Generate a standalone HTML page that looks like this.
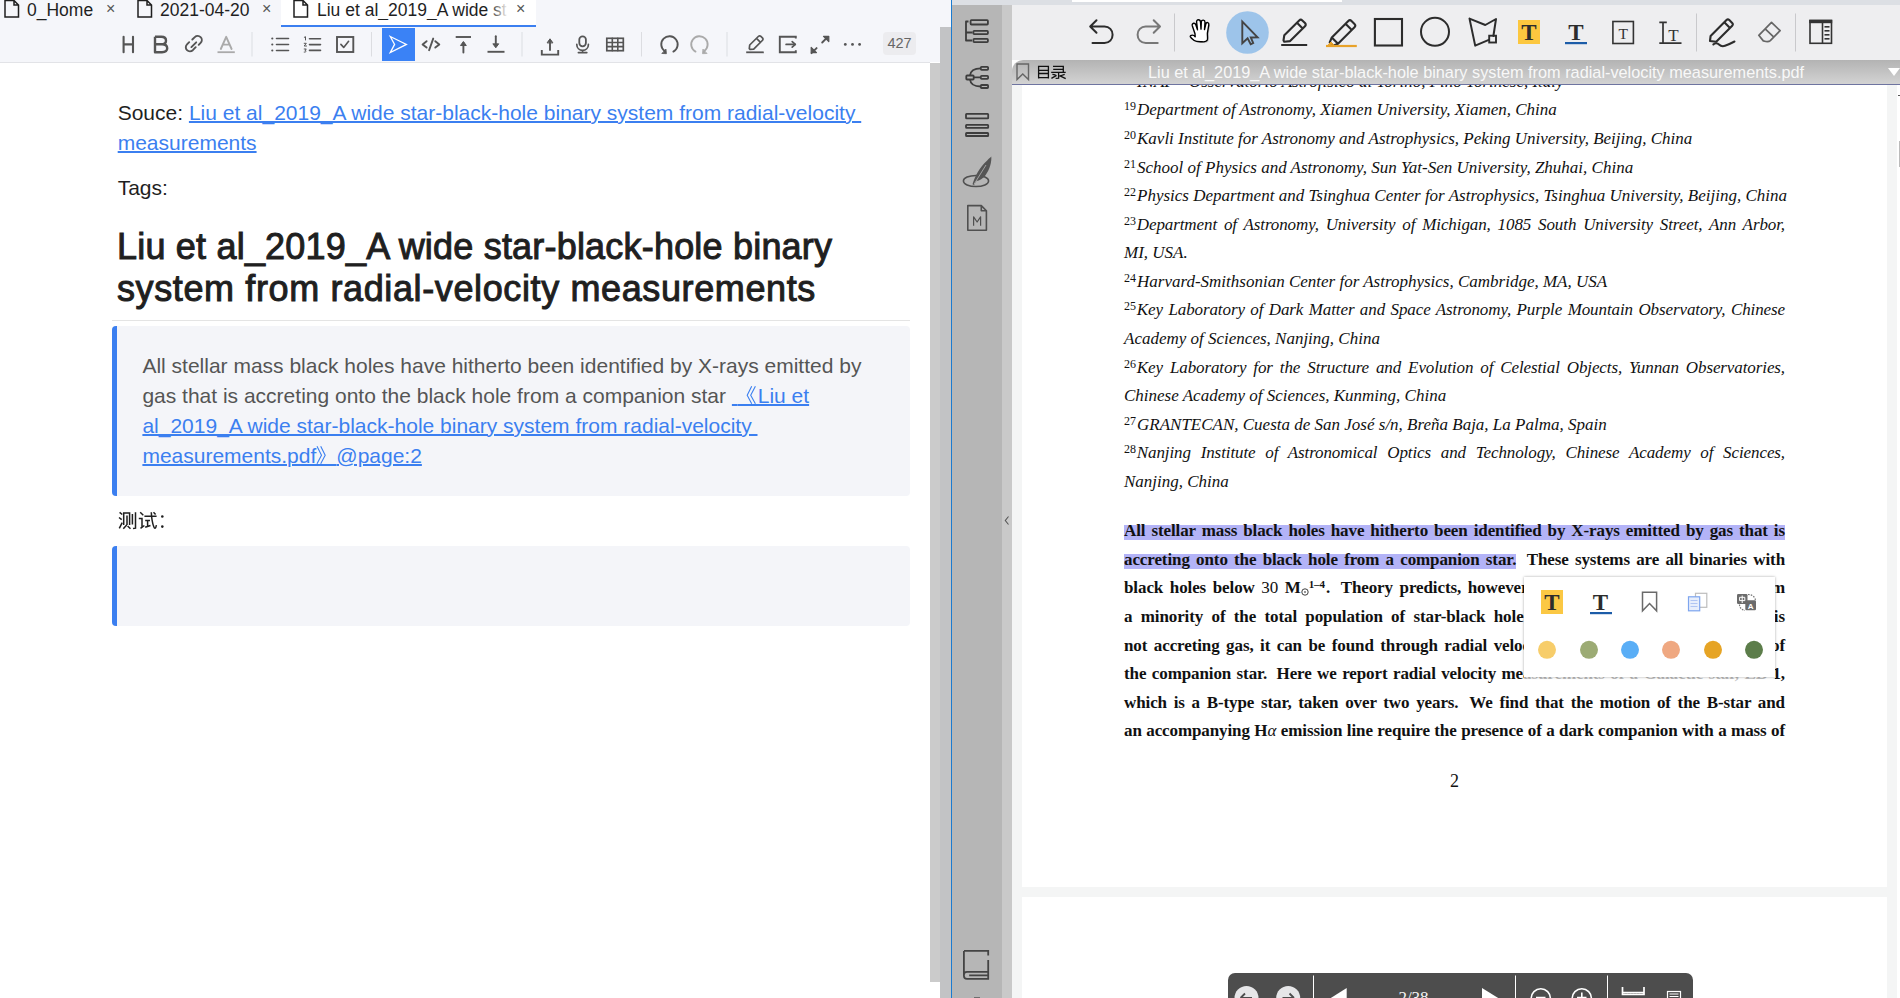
<!DOCTYPE html>
<html><head><meta charset="utf-8">
<style>
*{margin:0;padding:0;box-sizing:border-box}
html,body{width:1900px;height:998px;overflow:hidden;background:#fff;font-family:"Liberation Sans",sans-serif}
.a{position:absolute}
svg{position:absolute;overflow:visible}
.tt{position:absolute;white-space:nowrap;font-size:17.5px;color:#1f1f1f;line-height:20px}
.tx{position:absolute;font-size:16px;color:#555;line-height:16px}
.ic{fill:none;stroke:#555;stroke-width:1.6;stroke-linecap:round;stroke-linejoin:round}
.sep{position:absolute;top:32px;width:1px;height:24px;background:#dcdde1}
.body{position:absolute;font-size:21px;line-height:30px;white-space:nowrap;color:#1f1f1f}
.lk{color:#3b7ff0;text-decoration:underline;text-decoration-thickness:2px;text-underline-offset:1px}
.pdf{position:absolute;left:1124px;width:661px;font-family:"Liberation Serif",serif;font-size:17px;line-height:28.45px;color:#111;white-space:nowrap}
.it{font-style:italic}
.bd{font-weight:bold}
sup{font-size:11px;font-style:normal;vertical-align:0;position:relative;top:-7px;margin-right:1px}
.pt{fill:none;stroke:#2b2b2b;stroke-width:2;stroke-linejoin:round;stroke-linecap:round}
.pl{position:absolute;left:1124px;width:661px;font-family:"Liberation Serif",serif;font-size:17px;line-height:28.57px;height:28.57px;white-space:nowrap;color:#111}
.j{text-align:justify;text-align-last:justify;white-space:normal;letter-spacing:-0.1px}
.pl sup{font-size:12px;font-style:normal;font-weight:normal;position:relative;top:-5px;vertical-align:baseline;margin-right:1px}
.pl sup.b{font-weight:bold;font-size:11px}
.sun{font-size:11px;font-weight:normal;position:relative;top:4px}
</style></head><body>

<!-- ============ LEFT PANEL ============ -->
<div class="a" style="left:0;top:0;width:951px;height:62px;background:#f5f6fa"></div>
<div class="a" style="left:0;top:62px;width:930px;height:1px;background:#e2e3e7"></div>

<!-- tabs -->
<svg style="left:4px;top:0" width="16" height="18" viewBox="0 0 16 18"><path d="M1 .5 H10 L14.5 5 V17 H1 Z M10 .5 V5 H14.5" fill="none" stroke="#1f1f1f" stroke-width="1.5"/></svg>
<div class="tt" style="left:27px;top:0px">0_Home</div>
<div class="tx" style="left:106px;top:1px">×</div>
<svg style="left:137px;top:0" width="16" height="18" viewBox="0 0 16 18"><path d="M1 .5 H10 L14.5 5 V17 H1 Z M10 .5 V5 H14.5" fill="none" stroke="#1f1f1f" stroke-width="1.5"/></svg>
<div class="tt" style="left:160px;top:0px">2021-04-20</div>
<div class="tx" style="left:262px;top:1px">×</div>
<div class="a" style="left:281px;top:0;width:255px;height:25px;background:#fff"></div>
<div class="a" style="left:281px;top:25px;width:255px;height:2px;background:#3b7ff0"></div>
<svg style="left:293px;top:0" width="16" height="18" viewBox="0 0 16 18"><path d="M1 .5 H10 L14.5 5 V17 H1 Z M10 .5 V5 H14.5" fill="none" stroke="#1f1f1f" stroke-width="1.5"/></svg>
<div class="tt" style="left:317px;top:0px;width:190px;overflow:hidden">Liu et al_2019_A wide star</div>
<div class="a" style="left:490px;top:0;width:18px;height:25px;background:linear-gradient(90deg,rgba(255,255,255,0),#fff)"></div>
<div class="tx" style="left:516px;top:1px">×</div>

<!-- toolbar -->
<div class="a" style="left:382px;top:28px;width:33px;height:33px;background:#3a82f6"></div>
<svg class="a" style="left:382px;top:28px" width="33" height="33" viewBox="382 28 33 33"><path d="M390.3 36.5L406.4 44.4L390.3 52.5L394.6 44.4Z" fill="none" stroke="#fff" stroke-width="1.3" stroke-linejoin="miter"/></svg>
<svg class="a" style="left:0;top:0" width="1900" height="998" viewBox="0 0 1900 998">
<g fill="none" stroke="#555" stroke-width="1.8" stroke-linecap="round" stroke-linejoin="round">
 <!-- H -->
 <path d="M123.6 36.8V52.3 M133 36.8V52.3 M123.6 44.4H133" stroke-width="2.1"/>
 <!-- B -->
 <path d="M155 36.8H161.3C164.3 36.8 166 38.5 166 40.7C166 42.9 164.3 44.3 161.3 44.3H155 M155 44.3H162C165.2 44.3 167.2 45.9 167.2 48.3C167.2 50.7 165.2 52.2 162 52.2H155V36.8" stroke-width="2.4" stroke-linecap="butt"/>
 <!-- link -->
 <path d="M192.3 39.5L194.8 37.1C196.5 35.5 199 35.6 200.6 37.2C202.2 38.8 202.2 41.3 200.6 42.9L198.7 44.8 M195.7 47.2L192.8 50.2C191.1 51.8 188.6 51.8 187 50.2C185.4 48.6 185.4 46 187 44.4L189.2 42.2 M191.4 47.1L196.2 42.3" stroke-width="1.9"/>
 <!-- A gray -->
 <path d="M220.8 49L226.2 36.8L231.6 49 M222.8 44.6H229.6" stroke="#aaa" stroke-width="1.9"/>
 <path d="M217.5 52.2H234.8" stroke="#aaa" stroke-width="1.8" stroke-linecap="butt"/>
 <!-- ul -->
 <path d="M276.5 38.5H288.5 M276.5 44.5H288.5 M276.5 50.5H288.5" stroke-width="1.6"/>
 <circle cx="272.3" cy="38.5" r="1.1" fill="#555" stroke="none"/><circle cx="272.3" cy="44.5" r="1.1" fill="#555" stroke="none"/><circle cx="272.3" cy="50.5" r="1.1" fill="#555" stroke="none"/>
 <!-- ol -->
 <path d="M309.5 38.7H320.5 M309.5 44.6H320.5 M309.5 50.4H320.5" stroke-width="1.6"/>
 <path d="M304.3 37.3L305.5 36.7V40" stroke-width="1"/>
 <path d="M304.2 43.3H306.3L304.2 46H306.5" stroke-width="1"/>
 <path d="M304.2 49H306.3L305 50.3C306.6 50.5 306.6 52.3 304.2 52.1" stroke-width="1"/>
 <!-- checkbox -->
 <rect x="337" y="37" width="16.3" height="15" stroke-width="1.9" stroke-linejoin="miter"/>
 <path d="M340.9 44.4L343.7 47.4L348.6 41.3" stroke-width="1.6"/>
 <!-- code -->
 <path d="M426.6 41.2L422.6 44.4L426.6 47.6 M435.3 41.2L439.3 44.4L435.3 47.6 M433.2 38.6L429.1 50.2" stroke-width="1.9"/>
 <!-- top arrow -->
 <path d="M455.7 37H471" stroke-width="1.9" stroke-linecap="butt"/>
 <path d="M463.4 43V52.5" stroke-width="1.9"/>
 <path d="M460.7 45.2L463.4 41.5L466.1 45.2Z" fill="#555" stroke-width="1"/>
 <!-- bottom arrow -->
 <path d="M487.5 51.8H504.5" stroke-width="1.9" stroke-linecap="butt"/>
 <path d="M495.8 36.2V45.6" stroke-width="1.9"/>
 <path d="M493.1 44.1L495.8 47.8L498.5 44.1Z" fill="#555" stroke-width="1"/>
 <!-- upload -->
 <path d="M541.8 50V54.6H558.2V50" stroke-width="1.9" stroke-linecap="butt" stroke-linejoin="miter"/>
 <path d="M550 41.5V50" stroke-width="1.9"/>
 <path d="M547.3 42.6L550 38.8L552.7 42.6Z" fill="#555" stroke-width="1"/>
 <!-- mic -->
 <rect x="579.3" y="36.3" width="6.6" height="10" rx="3.3" stroke-width="1.8"/>
 <path d="M576.8 44.4C576.8 48 579.4 50.3 582.6 50.3C585.8 50.3 588.4 48 588.4 44.4 M582.6 50.3V52.6 M578.4 52.6H586.8" stroke-width="1.7"/>
 <!-- table -->
 <rect x="606.8" y="38.3" width="16.5" height="12.4" stroke-width="1.7" stroke-linejoin="miter"/>
 <path d="M606.8 42.5H623.3 M606.8 46.6H623.3 M612.3 38.3V50.7 M617.8 38.3V50.7" stroke-width="1.6"/>
 <!-- undo -->
<g transform="translate(0,0.8)"> <path d="M664.6 50.2A8.2 8.2 0 1 1 673.4 50.8" stroke-width="1.9"/>
 <path d="M666 48.6L666.4 52.9L662.2 52.7Z" fill="#555" stroke-width="0.8"/></g>
 <!-- redo -->
<g transform="translate(0,0.8)"> <g stroke="#aaa"><path d="M704.3 50.2A8.2 8.2 0 1 0 695.5 50.8" stroke-width="1.9"/><path d="M702.9 48.6L702.5 52.9L706.7 52.7Z" fill="#aaa" stroke-width="0.8"/></g></g>
 <!-- pen -->
 <path d="M749.3 48.6L749.7 45L758.3 36.5C759.2 35.6 760.1 35.6 760.9 36.4L762.4 37.9C763.2 38.7 763.2 39.6 762.3 40.5L753.7 49.1L750 49.3Z M756.5 38.4L760.5 42.3" stroke-width="1.7"/>
 <path d="M746.2 52.3H763.8" stroke-width="1.8" stroke-linecap="butt"/>
 <!-- export -->
 <path d="M795.8 38.4V36.8H779.8V52.2H795.8V50.3" stroke-width="1.9" stroke-linecap="butt" stroke-linejoin="miter"/>
 <path d="M786.2 44.4H795" stroke-width="1.9"/>
 <path d="M792.2 41.6L795.3 44.4L792.2 47.2" stroke-width="1.7"/>
 <!-- expand -->
 <path d="M822.2 42.5L827.5 37.2 M816.6 48.1L811.5 53.2" stroke-width="1.9"/>
 <path d="M823.5 36.3H828.8V41.6Z M811.2 47.4V52.6H816.5Z" fill="#555" stroke-width="1.2"/>
</g>
<g fill="#555"><circle cx="845.3" cy="44.4" r="1.4"/><circle cx="852.5" cy="44.4" r="1.4"/><circle cx="859.6" cy="44.4" r="1.4"/></g>
<g fill="#dcdde1"><rect x="251.5" y="32" width="1" height="24.5"/><rect x="371" y="32" width="1" height="24.5"/><rect x="521.5" y="32" width="1" height="24.5"/><rect x="641" y="32" width="1" height="24.5"/><rect x="726.5" y="32" width="1" height="24.5"/></g>
</svg>

<div class="a" style="left:883px;top:32px;width:33px;height:23px;background:#ececef;border-radius:4px"></div>
<div class="a" style="left:883px;top:32px;width:33px;height:23px;font-size:14.5px;line-height:23px;text-align:center;color:#666">427</div>


<!-- content -->
<div class="body" style="left:117.7px;top:98px">Souce: <span class="lk">Liu et al_2019_A wide star-black-hole binary system from radial-velocity&nbsp;</span></div>
<div class="body" style="left:117.7px;top:128px"><span class="lk">measurements</span></div>
<div class="body" style="left:117.7px;top:173px">Tags:</div>
<div class="a" style="left:117px;top:225.8px;font-size:36px;line-height:42.2px;font-weight:normal;letter-spacing:0.2px;-webkit-text-stroke:1px #1f1f1f;color:#1f1f1f;white-space:nowrap">Liu et al_2019_A wide star-black-hole binary<br><span style="letter-spacing:0.62px">system from radial-velocity measurements</span></div>
<div class="a" style="left:112px;top:320px;width:798px;height:1px;background:#e4e4e4"></div>
<div class="a" style="left:112px;top:326px;width:798px;height:170px;background:#f4f5f9;border-radius:4px"></div>
<div class="a" style="left:112px;top:326px;width:5px;height:170px;background:#3b7ff0;border-radius:4px 0 0 4px"></div>
<div class="body" style="left:142.4px;top:351px;color:#555">All stellar mass black holes have hitherto been identified by X-rays emitted by<br>gas that is accreting onto the black hole from a companion star <span class="lk">&nbsp;</span><span style="display:inline-block;width:20px;height:0;border-bottom:2px solid #3b7ff0;position:relative;top:3px"><svg style="left:0;top:-24px" width="20" height="24" viewBox="0 0 20 24"><path d="M13.7 6.3L9.2 15.3L13.7 23.7 M17.4 6.3L12.7 15.3L17.4 23.7" fill="none" stroke="#3b7ff0" stroke-width="1.1"/></svg></span><span class="lk">Liu et</span><br><span class="lk">al_2019_A wide star-black-hole binary system from radial-velocity&nbsp;</span><br><span class="lk">measurements.pdf</span><span style="display:inline-block;width:20px;height:0;border-bottom:2px solid #3b7ff0;position:relative;top:3px"><svg style="left:0;top:-24px" width="20" height="24" viewBox="0 0 20 24"><path d="M1 6.3L5.5 15.3L1 23.7 M4.7 6.3L9.2 15.3L4.7 23.7" fill="none" stroke="#3b7ff0" stroke-width="1.1"/></svg></span><span class="lk">@page:2</span></div>
<svg class="a" style="left:0;top:0" width="1900" height="998" viewBox="0 0 1900 998"><g fill="none" stroke="#1f1f1f" stroke-width="1.5" stroke-linecap="butt">
<path d="M119.6 512.3L122.3 514.5 M119 517.5L121.7 519.6 M119.3 528.4L122.2 522.6"/>
<path d="M123.7 524.9V513.1H129.6V524.9 M127 515.4V524.9 M126.7 524.9L123.3 528.7 M127.6 526L130.5 528.7"/>
<path d="M132.4 514V524.6 M135.5 512.2V528.2L133 528.6"/>
<path d="M140.2 512.3L143.3 515.2 M138.8 518.4H142V526.9 M140.5 528.4L144.4 525.5"/>
<path d="M144.4 516.3H156.6 M145.2 520.4H150 M147.6 520.4V526.3 M145.2 527.3L150.5 525.5 M151.3 512.2C151.5 517 152 522 153.8 526.8C154.5 528.6 155.7 529.3 156.4 525.2 M153.5 512.3L155.6 514.5"/>
</g><circle cx="162.3" cy="516.5" r="1.3" fill="#1f1f1f"/><circle cx="162.3" cy="526.6" r="1.3" fill="#1f1f1f"/></svg>
<div class="a" style="left:112px;top:546px;width:798px;height:80px;background:#f4f5f9;border-radius:4px"></div>
<div class="a" style="left:112px;top:546px;width:5px;height:80px;background:#3b7ff0;border-radius:4px 0 0 4px"></div>

<!-- left scrollbars -->
<div class="a" style="left:930px;top:63px;width:10px;height:919px;background:#cbcbcb"></div>
<div class="a" style="left:940px;top:27px;width:11px;height:971px;background:#c2c3c5"></div>

<!-- ============ RIGHT PANEL ============ -->
<div class="a" style="left:951px;top:0;width:1px;height:998px;background:#1b7bd0"></div>
<div class="a" style="left:952px;top:0;width:948px;height:5px;background:#dcdfe4"></div>
<div class="a" style="left:1072px;top:0;width:270px;height:2px;background:#fff"></div>
<div class="a" style="left:952px;top:5px;width:50px;height:993px;background:#b6b6b6"></div>
<div class="a" style="left:1002px;top:5px;width:10px;height:993px;background:#c9c9c9"></div>
<div class="a" style="left:1012px;top:5px;width:888px;height:55px;background:#eeeef0"></div>
<div class="a" style="left:1012px;top:85px;width:888px;height:913px;background:#f4f5f5"></div>
<div class="a" style="left:1022px;top:85px;width:865px;height:802px;background:#fff"></div>
<div class="a" style="left:1022px;top:897px;width:865px;height:101px;background:#fff"></div>
<div class="a" style="left:1897px;top:85px;width:3px;height:913px;background:#fff"></div>

<div class="a" style="left:1124px;top:525px;width:661px;height:15px;background:#b3b3f7"></div>
<div class="a" style="left:1124px;top:553.5px;width:392px;height:15px;background:#b3b3f7"></div>
<div class="pl ln it" style="top:67.83px"><sup>18</sup>INAF - Osservatorio Astrofisico di Torino, Pino Torinese, Italy</div>
<div class="pl ln it" style="top:96.40px"><sup>19</sup>Department of Astronomy, Xiamen University, Xiamen, China</div>
<div class="pl ln it" style="top:124.97px"><sup>20</sup>Kavli Institute for Astronomy and Astrophysics, Peking University, Beijing, China</div>
<div class="pl ln it" style="top:153.54px"><sup>21</sup>School of Physics and Astronomy, Sun Yat-Sen University, Zhuhai, China</div>
<div class="pl ln it" style="top:182.11px"><sup>22</sup>Physics Department and Tsinghua Center for Astrophysics, Tsinghua University, Beijing, China</div>
<div class="pl ln it j" style="top:210.68px"><sup>23</sup>Department of Astronomy, University of Michigan, 1085 South University Street, Ann Arbor,</div>
<div class="pl ln it" style="top:239.25px">MI, USA.</div>
<div class="pl ln it" style="top:267.82px"><sup>24</sup>Harvard-Smithsonian Center for Astrophysics, Cambridge, MA, USA</div>
<div class="pl ln it j" style="top:296.39px"><sup>25</sup>Key Laboratory of Dark Matter and Space Astronomy, Purple Mountain Observatory, Chinese</div>
<div class="pl ln it" style="top:324.96px">Academy of Sciences, Nanjing, China</div>
<div class="pl ln it j" style="top:353.53px"><sup>26</sup>Key Laboratory for the Structure and Evolution of Celestial Objects, Yunnan Observatories,</div>
<div class="pl ln it" style="top:382.10px">Chinese Academy of Sciences, Kunming, China</div>
<div class="pl ln it" style="top:410.67px"><sup>27</sup>GRANTECAN, Cuesta de San José s/n, Breña Baja, La Palma, Spain</div>
<div class="pl ln it j" style="top:439.24px"><sup>28</sup>Nanjing Institute of Astronomical Optics and Technology, Chinese Academy of Sciences,</div>
<div class="pl ln it" style="top:467.81px">Nanjing, China</div>
<div class="pl ln bd j" style="top:517.30px"><span class="hl">All stellar mass black holes have hitherto been identified by X-rays emitted by gas that is</span></div>
<div class="pl ln bd j" style="top:545.85px"><span class="hl">accreting onto the black hole from a companion star.</span> <span style="margin-left:4px"></span>These systems are all binaries with</div>
<div class="pl ln bd j" style="top:574.40px">black holes below <span style="font-weight:normal">30</span> M<span style="display:inline-block;width:8px;height:8px;position:relative;top:3px"><svg style="left:0;top:0" width="8" height="8" viewBox="0 0 8 8"><circle cx="4" cy="4" r="3.2" fill="none" stroke="#111" stroke-width="0.8"/><circle cx="4" cy="4" r="0.8" fill="#111"/></svg></span><sup class="b">1–4</sup>. <span style="margin-left:4px"></span>Theory predicts, however, that X-ray emitting systems form</div>
<div class="pl ln bd j" style="top:602.95px">a minority of the total population of star-black hole binaries. <span style="margin-left:4px"></span>When the black hole is</div>
<div class="pl ln bd j" style="top:631.50px">not accreting gas, it can be found through radial velocity measurements of the motion of</div>
<div class="pl ln bd j" style="top:660.05px">the companion star. <span style="margin-left:4px"></span>Here we report radial velocity measurements of a Galactic star, LB-1,</div>
<div class="pl ln bd j" style="top:688.60px">which is a B-type star, taken over two years. <span style="margin-left:4px"></span>We find that the motion of the B-star and</div>
<div class="pl ln bd j" style="top:717.15px">an accompanying H<i style="font-weight:normal">α</i> emission line require the presence of a dark companion with a mass of</div>
<div class="a" style="left:1450px;top:766.5px;font-family:'Liberation Serif',serif;font-size:18px;line-height:28px;color:#111">2</div>

<svg class="a" style="left:0;top:0" width="1900" height="998" viewBox="0 0 1900 998">
<g fill="none" stroke="#2c2c2c" stroke-width="2" stroke-linecap="round" stroke-linejoin="round">
 <!-- undo -->
 <path d="M1090.2 26.5L1096.5 20.2 M1090.2 26.5L1096.5 32.8 M1090.5 26.5H1104.5C1109.3 26.5 1112.6 30 1112.6 34.7C1112.6 39.4 1109.3 43 1104.5 43H1092.5"/>
 <!-- redo -->
 <path d="M1160 26.5L1153.7 20.2 M1160 26.5L1153.7 32.8 M1159.7 26.5H1145.7C1140.9 26.5 1137.6 30 1137.6 34.7C1137.6 39.4 1140.9 43 1145.7 43H1157.7" stroke="#777"/>
 <!-- separators -->
 <path d="M1174.5 13.5V51.5 M1696.5 13.5V51.5 M1795.5 13.5V51.5" stroke="#c9c9cc" stroke-width="1" stroke-linecap="butt"/>
</g>
<!-- hand -->
<g transform="translate(1190,19.5)">
 <path d="M4.2 21C2.3 19.6 0.6 18 0.3 17.3C0 16.4 1 15.6 2.4 15.6C3.7 15.6 4.8 16.7 5.2 17.2L5 14.3L2.3 6.3C1.9 5 2.6 4 3.6 3.8C4.6 3.6 5.5 4.3 5.9 5.5L7.5 10.3L6.6 2.5C6.5 1.2 7.2 0.2 8.4 0.2C9.6 0.2 10.4 1.1 10.5 2.4L11 9.6L11.3 2.6C11.4 1.3 12.2 0.5 13.3 0.6C14.4 0.7 15 1.6 15 2.9L14.5 10.1L15.8 4.6C16.1 3.5 16.9 2.9 17.8 3.1C18.7 3.3 19 4.1 18.8 5.3L17.4 13.6C17.3 16.5 17.9 18.6 17.4 20.3C16.9 21.5 15 22.5 12.2 22.3C9.4 22.2 6.3 22.5 4.2 21Z" fill="#000" opacity="0.18" transform="translate(1.2,1.3)"/>
 <path d="M4.2 21C2.3 19.6 0.6 18 0.3 17.3C0 16.4 1 15.6 2.4 15.6C3.7 15.6 4.8 16.7 5.2 17.2L5 14.3L2.3 6.3C1.9 5 2.6 4 3.6 3.8C4.6 3.6 5.5 4.3 5.9 5.5L7.5 10.3L6.6 2.5C6.5 1.2 7.2 0.2 8.4 0.2C9.6 0.2 10.4 1.1 10.5 2.4L11 9.6L11.3 2.6C11.4 1.3 12.2 0.5 13.3 0.6C14.4 0.7 15 1.6 15 2.9L14.5 10.1L15.8 4.6C16.1 3.5 16.9 2.9 17.8 3.1C18.7 3.3 19 4.1 18.8 5.3L17.4 13.6C17.3 16.5 17.9 18.6 17.4 20.3C16.9 21.5 15 22.5 12.2 22.3C9.4 22.2 6.3 22.5 4.2 21Z" fill="#fff" stroke="#000" stroke-width="1.4" stroke-linejoin="round"/>
</g>
<!-- select circle + cursor -->
<circle cx="1247.5" cy="32.5" r="21.3" fill="#9dc4ea"/>
<path d="M1242.3 21.5V43.3L1247.6 38.3L1250.7 44.3L1253.2 43L1250.8 37.5L1257.6 37.3Z" fill="none" stroke="#444" stroke-width="1.9" stroke-linejoin="miter"/>
<g fill="none" stroke="#2c2c2c" stroke-width="2.1" stroke-linejoin="round" stroke-linecap="round">
 <!-- pen -->
 <path d="M1283.5 40.5L1284.3 35.2L1299.2 20.4C1300.2 19.4 1301.3 19.4 1302.3 20.4L1305 23.1C1306 24.1 1306 25.2 1305 26.2L1290.1 41.1L1284.2 41.7Z M1297 22.7L1302.7 28.4"/>
 <path d="M1281.2 45H1307.2" stroke-width="2" stroke-linecap="butt"/>
 <!-- highlighter -->
 <path d="M1331.8 37.5L1348.3 21C1349.3 20 1350.5 20 1351.5 21L1354.5 24C1355.5 25 1355.5 26.2 1354.5 27.2L1338 43.7Z M1345.5 23.8L1351.8 30.1 M1331.8 37.5L1329.7 42.3L1333.3 45.8L1338 43.7"/>
 <path d="M1328.5 44.4L1331 42L1333.5 44.6Z" fill="#e8a229" stroke="#e8a229" stroke-width="1"/>
 <path d="M1326 46H1356.8" stroke="#e8a229" stroke-width="2.2" stroke-linecap="butt"/>
 <!-- rect -->
 <rect x="1374.9" y="19" width="27.1" height="26.5" stroke-width="2.1" stroke-linejoin="miter"/>
 <!-- circle -->
 <circle cx="1435" cy="31.8" r="14" stroke-width="2"/>
 <!-- polygon -->
 <path d="M1469.5 18.6L1485.3 25L1496 19L1493.4 36 M1488.8 39.8L1475.2 45.6L1469.5 18.6" stroke-width="2"/>
 <rect x="1489.2" y="35.7" width="6.8" height="6.8" stroke-width="1.9" stroke-linejoin="miter"/>
</g>
<!-- yellow T -->
<rect x="1518" y="20" width="22" height="24" fill="#fcc73f"/>
<g font-family="Liberation Serif" fill="#2c2c2c">
 <text x="1529" y="40" font-size="23" font-weight="bold" text-anchor="middle">T</text>
 <text x="1576" y="39.5" font-size="23" font-weight="bold" text-anchor="middle">T</text>
</g>
<rect x="1565" y="42" width="22" height="2.2" fill="#1c5ca8"/>
<!-- boxed T -->
<rect x="1612.9" y="21.5" width="20.5" height="22" fill="none" stroke="#333" stroke-width="1.6"/>
<text x="1623.2" y="38.5" font-family="Liberation Serif" font-size="15.5" text-anchor="middle" fill="#333">T</text>
<!-- It -->
<g fill="none" stroke="#333" stroke-width="1.7">
 <path d="M1663 22.3V43 M1659.3 22.3H1666.8 M1659.3 43.2H1681.5"/>
</g>
<text x="1673.5" y="40.5" font-family="Liberation Serif" font-size="17" text-anchor="middle" fill="#333">T</text>
<!-- signature pen -->
<g fill="none" stroke="#2c2c2c" stroke-width="2.1" stroke-linejoin="round" stroke-linecap="round">
 <path d="M1710 41L1710.6 36L1726.5 20C1727.4 19.1 1728.4 19.1 1729.3 20L1732.2 22.9C1733.1 23.8 1733.1 24.8 1732.2 25.7L1716.2 41.7Z M1724.3 22.2L1730 27.9"/>
 <path d="M1713.3 44.5C1715 42.5 1717.5 43 1719 44.5C1720.6 46.1 1723 46.5 1725 45.8C1727.5 45 1729.8 44 1734.5 41.5" stroke-width="2"/>
</g>
<!-- eraser -->
<g fill="none" stroke="#666" stroke-width="1.7" stroke-linejoin="round">
 <path d="M1758.8 35.3L1771.5 22.3L1780.1 30.7L1770.3 40.6C1769 41.8 1767.5 41.8 1765.8 41.5L1763.3 40.9Z M1765.2 28.8L1773.8 37.2"/>
</g>
<!-- sidebar toggle -->
<g fill="none" stroke="#333" stroke-width="1.6" stroke-linejoin="miter">
 <rect x="1810" y="20.5" width="21.5" height="22.8"/>
 <path d="M1822.5 20.5V43.3"/>
</g>
<rect x="1809.2" y="19.8" width="23" height="3.4" fill="#333"/>
<g fill="#333"><rect x="1824.5" y="26" width="5" height="1.6"/><rect x="1824.5" y="30" width="5" height="1.6"/><rect x="1824.5" y="34" width="5" height="1.6"/><rect x="1824.5" y="38" width="5" height="1.6"/></g>

<!-- left sidebar icons -->
<g fill="none" stroke="#3d3d3d" stroke-width="1.8" stroke-linejoin="round">
 <rect x="970.6" y="20.2" width="17.3" height="4.3" rx="0.8"/>
 <rect x="973.4" y="30.9" width="14.5" height="3.2" rx="0.8"/>
 <rect x="973.4" y="38.9" width="14.5" height="3.2" rx="0.8"/>
 <path d="M968.5 21.5H966V40.5H972 M966 32.5H972.5"/>
 <rect x="966.3" y="75.5" width="7.4" height="4" rx="0.8"/>
 <rect x="980.8" y="66.8" width="7.3" height="3" rx="0.8"/>
 <rect x="980.8" y="75.9" width="7.3" height="3" rx="0.8"/>
 <rect x="980.8" y="85" width="7.3" height="3" rx="0.8"/>
 <path d="M973.7 77.4H980.8 M970 75.5C970.5 71 974.5 68.3 980.8 68.3 M970 79.5C970.5 84 974.5 86.5 980.8 86.5"/>
 <rect x="966" y="113.8" width="22.2" height="4.5" rx="0.6"/>
 <rect x="966" y="124.8" width="22.2" height="3" rx="0.6"/>
 <rect x="966" y="133" width="22.2" height="3" rx="0.6"/>
 <ellipse cx="976" cy="181" rx="12.6" ry="5.6" stroke="#505050" stroke-width="1.5"/>
 <path d="M967.8 205.6H981.3L986.4 210.7V230.2H967.8Z M981.3 205.6V210.7H986.4" stroke="#505050" stroke-width="1.6"/>
 <path d="M973.6 225.7V216.8L977.1 222L980.6 216.8V225.7" stroke="#505050" stroke-width="1.2"/>
 <path d="M964 950.9H988.2V955.6 M988.2 960V978.8H967C965.1 978.8 963.9 977.5 963.9 975.7V951 M963.9 975C963.9 973 965 971.9 967 971.9H988.2 M969.2 975.3H988.5" stroke="#444" stroke-width="1.8" stroke-linejoin="miter"/>
</g>
<path d="M972.5 184.3C975 176 979 168 987.2 160.4C989 158.5 990.6 157.3 991.3 156.5C991.7 162 990 169 985.5 175.2C983 178.5 979.5 180.5 976.5 181C975.6 182.2 974.9 183.5 974 185Z" fill="#555"/>
<path d="M974.2 184L986 165" stroke="#b6b6b6" stroke-width="0.8"/>
<path d="M1008.5 516.5L1005.3 520.5L1008.5 524.5" fill="none" stroke="#555" stroke-width="1.1"/>
</svg>

<!-- popup -->
<div class="a" style="left:974px;top:996.5px;width:6px;height:2px;background:#6f6f6f"></div>
<div class="a" style="left:1523.5px;top:676px;width:251px;height:5px;background:rgba(255,255,255,0.72)"></div>
<div class="a" style="left:1523.5px;top:576.5px;width:251px;height:100.5px;background:#fff;box-shadow:0 0 2.5px rgba(0,0,0,0.35)"></div>
<svg class="a" style="left:0;top:0" width="1900" height="998" viewBox="0 0 1900 998">
 <rect x="1541" y="590" width="22" height="24" fill="#fbc844"/>
 <text x="1552" y="610" font-family="Liberation Serif" font-weight="bold" font-size="23" text-anchor="middle" fill="#2c2c2c">T</text>
 <text x="1600.5" y="609.5" font-family="Liberation Serif" font-weight="bold" font-size="23" text-anchor="middle" fill="#2c2c2c">T</text>
 <rect x="1590" y="612" width="22" height="2.2" fill="#1c5ca8"/>
 <path d="M1642.5 592.2H1656.6V610.8L1649.55 603.5L1642.5 610.8Z" fill="none" stroke="#6a6a6a" stroke-width="1.5"/>
 <rect x="1695.5" y="593.3" width="11.3" height="14" fill="#fff" stroke="#bdbdbd" stroke-width="1.2"/>
 <rect x="1688.5" y="596.8" width="11.2" height="14" fill="#e7eefc" stroke="#7ea5ee" stroke-width="1.2"/>
 <path d="M1690.5 600.5H1697.5 M1690.5 603.5H1697.5 M1690.5 606.5H1697.5" stroke="#a9c0f2" stroke-width="0.9"/>
 <path d="M1739.5 604.5C1739.5 608 1742 610 1745 610.5 M1748 594.5C1752 594.5 1755.3 597 1755.5 600.5" fill="none" stroke="#777" stroke-width="1.2" stroke-dasharray="1.6 1.2"/>
 <rect x="1737" y="594" width="10.5" height="10" rx="1.2" fill="#6b6b6b"/>
 <rect x="1745.3" y="600.3" width="10.7" height="10" rx="1.2" fill="#6b6b6b"/>
 <path d="M1739.6 597.3H1744.8V600.6H1739.6Z M1742.2 595.5V603" fill="none" stroke="#fff" stroke-width="1"/>
 <text x="1750.7" y="608.6" font-family="Liberation Sans" font-size="8" font-weight="bold" text-anchor="middle" fill="#fff">A</text>
 <circle cx="1547" cy="649.8" r="9" fill="#f7cd6a"/>
 <circle cx="1589" cy="649.8" r="9" fill="#9cab74"/>
 <circle cx="1630" cy="649.8" r="9" fill="#5aaef6"/>
 <circle cx="1671" cy="649.8" r="9" fill="#efa881"/>
 <circle cx="1713" cy="649.8" r="9" fill="#e6a425"/>
 <circle cx="1754" cy="649.8" r="9" fill="#5c7d4a"/>
</svg>
<!-- bottom toolbar -->
<div class="a" style="left:1228px;top:973px;width:465px;height:40px;background:#4d4d4d;border-radius:7px"></div>
<svg class="a" style="left:0;top:0" width="1900" height="998" viewBox="0 0 1900 998">
 <circle cx="1246.5" cy="998" r="12" fill="#e6e6e8"/>
 <circle cx="1288.2" cy="998" r="12" fill="#e6e6e8"/>
 <path d="M1240.5 998L1245 993.5 M1240.5 998H1252 M1294 998L1289.5 993.5 M1294 998H1282.5" stroke="#4d4d4d" stroke-width="1.8" fill="none"/>
 <path d="M1313.5 975.5V998 M1515.5 975.5V998 M1607.5 975.5V998" stroke="#fff" stroke-width="1"/>
 <path d="M1346.7 988L1330 998.5L1346.7 1009Z" fill="#fff"/>
 <path d="M1482 988L1499 998.5L1482 1009Z" fill="#fff"/>
 <circle cx="1540.8" cy="998.5" r="9.7" fill="none" stroke="#fff" stroke-width="1.6"/>
 <circle cx="1581.8" cy="998.5" r="9.7" fill="none" stroke="#fff" stroke-width="1.6"/>
 <path d="M1536 997.5H1545.5 M1577 997.5H1586.5 M1581.8 992.5V1002" stroke="#fff" stroke-width="1.6"/>
 <path d="M1622.5 987V994.5H1644V987 M1622.5 992.5H1644" fill="none" stroke="#fff" stroke-width="1.7"/>
 <path d="M1623.5 992.8H1643" stroke="#fff" stroke-width="1" stroke-dasharray="2 1"/>
 <rect x="1667.5" y="991.5" width="13" height="10" fill="none" stroke="#fff" stroke-width="1.2"/>
 <path d="M1669.5 994H1678.5 M1669.5 996.5H1678.5" stroke="#fff" stroke-width="1"/>
 <text x="1413.5" y="1003" font-family="Liberation Serif" font-size="17" text-anchor="middle" fill="#f4f4f4">2/38</text>
</svg>

<div class="a" style="left:1012px;top:60px;width:888px;height:25px;background:linear-gradient(#b3b3b3,#d3d3d3);border-bottom:1px solid #6e74a0;border-radius:11px 0 0 0"></div>
<svg style="left:1016px;top:63px" width="14" height="18" viewBox="0 0 14 18"><path d="M1 1 H12.5 V16.5 L6.75 11 L1 16.5 Z" fill="none" stroke="#666" stroke-width="1.4"/></svg>
<svg class="a" style="left:0;top:0" width="1900" height="998" viewBox="0 0 1900 998"><g fill="none" stroke="#111" stroke-width="1.3" stroke-linecap="butt">
<path d="M1038.6 78.6V66.3H1048.4V78.6 M1038.6 70.4H1048.4 M1038.6 73.5H1048.4 M1038.6 77.6H1048.4"/>
<path d="M1053 66.3H1063.3V72.4 M1053.2 69.4H1063 M1051.2 72.4H1065.7 M1058.6 72.4V78.2L1055.6 78.4 M1052.4 74.3L1055.6 74.8 M1051.4 78.4L1056.6 75.4 M1064.7 74.4L1060 76 M1059.5 75.6L1065.7 78.6"/>
</g></svg>
<div class="a" style="left:1148px;top:63px;font-size:16.3px;line-height:18px;color:#f8f8f8;white-space:nowrap">Liu et al_2019_A wide star-black-hole binary system from radial-velocity measurements.pdf</div>
<svg style="left:1888px;top:68px" width="12" height="9" viewBox="0 0 12 9"><path d="M0 0 H12 L6 8 Z" fill="#fff"/></svg>

<div class="a" style="left:1898px;top:94.5px;width:2px;height:1.5px;background:#555"></div>
<div class="a" style="left:1899px;top:141px;width:1px;height:26px;background:#bbb"></div>
</body></html>
